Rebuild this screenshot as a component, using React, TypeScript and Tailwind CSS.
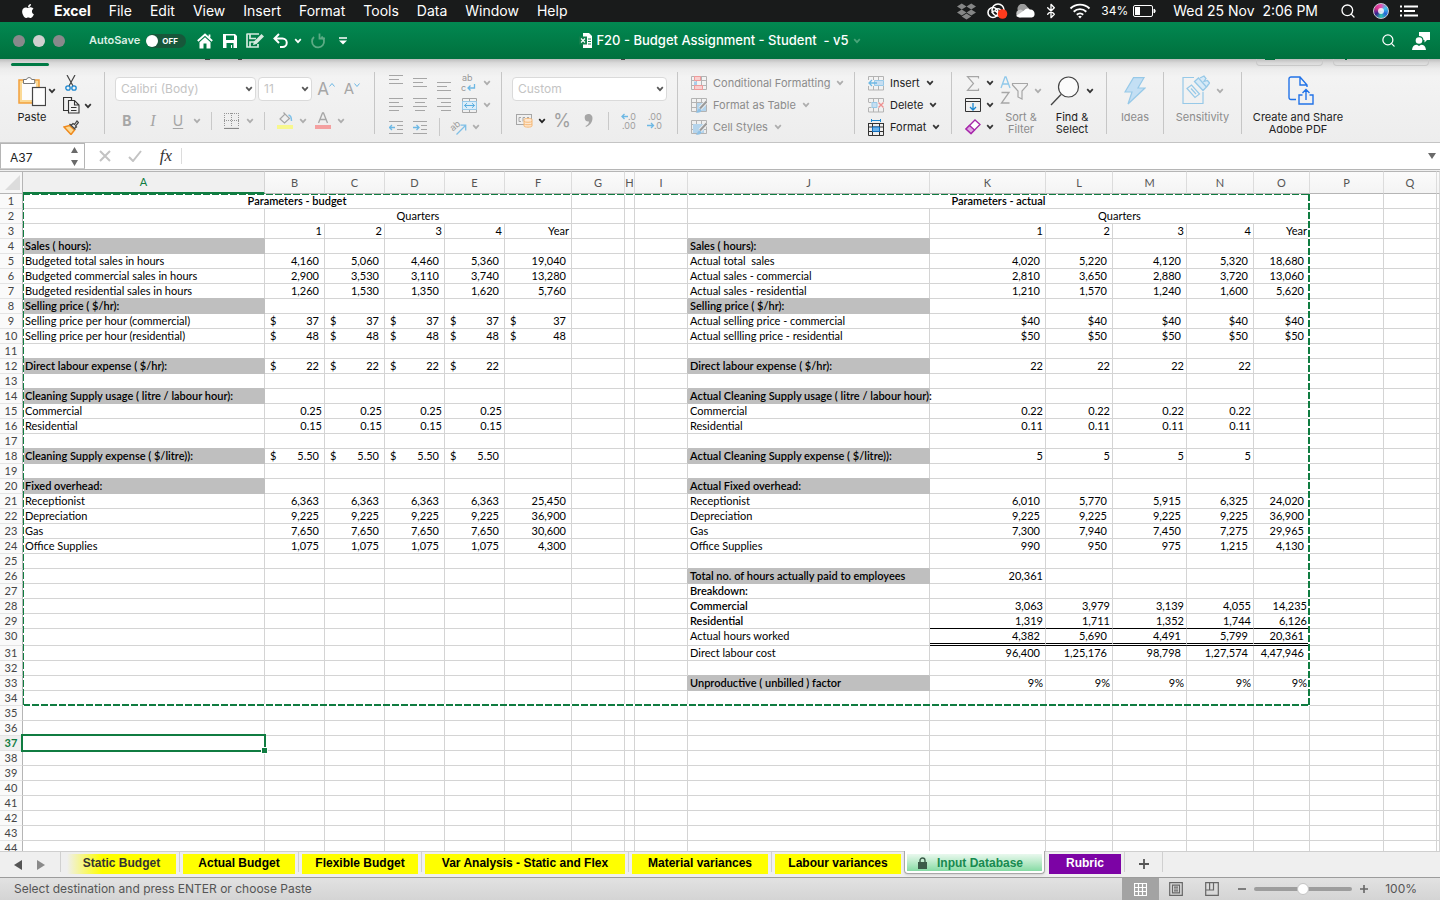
import type { ReactNode } from "react";
import { FaApple, FaDropbox } from "react-icons/fa";
import { Bluetooth, Search } from "lucide-react";

/* ---------- sheet data ---------- */

type Cell = {
  text?: string;
  kind?: "label" | "plain" | "acct" | "cur" | "center";
  bold?: boolean;
  fill?: boolean;
  span?: number;
};

const COLS = "ABCDEFGHIJKLMNOPQR".split("");
const COL_WIDTHS = [
  "w-[242px]", "w-[60px]", "w-[60px]", "w-[60px]", "w-[60px]", "w-[67px]", "w-[53px]", "w-[10px]", "w-[53px]",
  "w-[242px]", "w-[116px]", "w-[67px]", "w-[74px]", "w-[67px]", "w-[56px]", "w-[74px]", "w-[53px]", "w-auto",
];
const ROW_COUNT = 44;
const sheet: Record<string, Cell> = {};

function put(row: number, startCol: string, kind: Cell["kind"], values: string[], bold = false) {
  const start = COLS.indexOf(startCol);
  values.forEach((text, i) => {
    sheet[COLS[start + i] + row] = { text, kind, bold };
  });
}
function label(row: number, col: string, text: string, style: "" | "bold" | "fill" = "") {
  sheet[col + row] = { text, kind: "label", bold: style !== "", fill: style === "fill" };
}

sheet.A1 = { text: "Parameters - budget", kind: "center", bold: true, span: 6 };
sheet.J1 = { text: "Parameters - actual", kind: "center", bold: true, span: 6 };
sheet.B2 = { text: "Quarters", kind: "center", span: 5 };
sheet.K2 = { text: "Quarters", kind: "center", span: 5 };
put(3, "B", "plain", ["1", "2", "3", "4", "Year"]);
put(3, "K", "plain", ["1", "2", "3", "4", "Year"]);

label(4, "A", "Sales ( hours):", "fill");
label(5, "A", "Budgeted total sales in hours");
label(6, "A", "Budgeted commercial sales in hours");
label(7, "A", "Budgeted residential sales in hours");
label(8, "A", "Selling price ( $/hr):", "fill");
label(9, "A", "Selling price per hour (commercial)");
label(10, "A", "Selling price per hour (residential)");
label(12, "A", "Direct labour expense ( $/hr):", "fill");
label(14, "A", "Cleaning Supply usage ( litre / labour hour):", "fill");
label(15, "A", "Commercial");
label(16, "A", "Residential");
label(18, "A", "Cleaning Supply expense ( $/litre)):", "fill");
label(20, "A", "Fixed overhead:", "fill");
label(21, "A", "Receptionist");
label(22, "A", "Depreciation");
label(23, "A", "Gas");
label(24, "A", "Office Supplies");
put(5, "B", "acct", ["4,160", "5,060", "4,460", "5,360", "19,040"]);
put(6, "B", "acct", ["2,900", "3,530", "3,110", "3,740", "13,280"]);
put(7, "B", "acct", ["1,260", "1,530", "1,350", "1,620", "5,760"]);
put(9, "B", "cur", ["37", "37", "37", "37", "37"]);
put(10, "B", "cur", ["48", "48", "48", "48", "48"]);
put(12, "B", "cur", ["22", "22", "22", "22"]);
put(15, "B", "plain", ["0.25", "0.25", "0.25", "0.25"]);
put(16, "B", "plain", ["0.15", "0.15", "0.15", "0.15"]);
put(18, "B", "cur", ["5.50", "5.50", "5.50", "5.50"]);
put(21, "B", "acct", ["6,363", "6,363", "6,363", "6,363", "25,450"]);
put(22, "B", "acct", ["9,225", "9,225", "9,225", "9,225", "36,900"]);
put(23, "B", "acct", ["7,650", "7,650", "7,650", "7,650", "30,600"]);
put(24, "B", "acct", ["1,075", "1,075", "1,075", "1,075", "4,300"]);

label(4, "J", "Sales ( hours):", "fill");
label(5, "J", "Actual total  sales");
label(6, "J", "Actual sales - commercial");
label(7, "J", "Actual sales - residential");
label(8, "J", "Selling price ( $/hr):", "fill");
label(9, "J", "Actual selling price - commercial");
label(10, "J", "Actual sellling price - residential");
label(12, "J", "Direct labour expense ( $/hr):", "fill");
label(14, "J", "Actual Cleaning Supply usage ( litre / labour hour):", "fill");
label(15, "J", "Commercial");
label(16, "J", "Residential");
label(18, "J", "Actual Cleaning Supply expense ( $/litre)):", "fill");
label(20, "J", "Actual Fixed overhead:", "fill");
label(21, "J", "Receptionist");
label(22, "J", "Depreciation");
label(23, "J", "Gas");
label(24, "J", "Office Supplies");
label(26, "J", "Total no. of hours actually paid to employees", "fill");
label(27, "J", "Breakdown:", "bold");
label(28, "J", "Commercial", "bold");
label(29, "J", "Residential", "bold");
label(30, "J", "Actual hours worked");
label(31, "J", "Direct labour cost");
label(33, "J", "Unproductive ( unbilled ) factor", "fill");
put(5, "K", "acct", ["4,020", "5,220", "4,120", "5,320", "18,680"]);
put(6, "K", "acct", ["2,810", "3,650", "2,880", "3,720", "13,060"]);
put(7, "K", "acct", ["1,210", "1,570", "1,240", "1,600", "5,620"]);
put(9, "K", "acct", ["$40", "$40", "$40", "$40", "$40"]);
put(10, "K", "acct", ["$50", "$50", "$50", "$50", "$50"]);
put(12, "K", "plain", ["22", "22", "22", "22"]);
put(15, "K", "plain", ["0.22", "0.22", "0.22", "0.22"]);
put(16, "K", "plain", ["0.11", "0.11", "0.11", "0.11"]);
put(18, "K", "plain", ["5", "5", "5", "5"]);
put(21, "K", "acct", ["6,010", "5,770", "5,915", "6,325", "24,020"]);
put(22, "K", "acct", ["9,225", "9,225", "9,225", "9,225", "36,900"]);
put(23, "K", "acct", ["7,300", "7,940", "7,450", "7,275", "29,965"]);
put(24, "K", "acct", ["990", "950", "975", "1,215", "4,130"]);
put(26, "K", "plain", ["20,361"]);
put(28, "K", "plain", ["3,063", "3,979", "3,139", "4,055", "14,235"]);
put(29, "K", "plain", ["1,319", "1,711", "1,352", "1,744", "6,126"]);
put(30, "K", "acct", ["4,382", "5,690", "4,491", "5,799", "20,361"]);
put(31, "K", "acct", ["96,400", "1,25,176", "98,798", "1,27,574", "4,47,946"]);
put(33, "K", "plain", ["9%", "9%", "9%", "9%", "9%"]);

/* ---------- small shared pieces ---------- */

function Chevron({ className = "text-[#333]" }: { className?: string }) {
  return (
    <svg width="8" height="6" viewBox="0 0 8 6" className={`shrink-0 ${className}`} fill="none" stroke="currentColor" strokeWidth="1.7">
      <path d="M1.2 1.2 4 4.2 6.8 1.2" />
    </svg>
  );
}

function Svg({ w, h, children, className = "" }: { w: number; h: number; children: ReactNode; className?: string }) {
  return (
    <svg width={w} height={h} viewBox={`0 0 ${w} ${h}`} fill="none" className={`shrink-0 ${className}`}>
      {children}
    </svg>
  );
}

function IconButton({ name, className = "", children }: { name: string; className?: string; children: ReactNode }) {
  return (
    <button type="button" aria-label={name} className={`flex shrink-0 items-center justify-center ${className}`}>
      {children}
    </button>
  );
}

const Divider = () => <div className="mt-[5px] h-[62px] w-px shrink-0 bg-[#c6c6c6]" />;
const SmallDivider = ({ className = "" }: { className?: string }) => (
  <div className={`h-[18px] w-px shrink-0 bg-[#c9c9c9] ${className}`} />
);

/* ---------- macOS menu bar ---------- */

function MenuBar() {
  const menus = ["File", "Edit", "View", "Insert", "Format", "Tools", "Data", "Window", "Help"];
  return (
    <nav className="flex h-[22px] shrink-0 items-center bg-[#191b1b] pr-[22px] pl-5 text-sm leading-[22px] text-white">
      <FaApple className="mr-[18px] h-4 w-4 shrink-0" aria-hidden />
      <div className="flex gap-[18px] whitespace-nowrap">
        <a href="#excel" className="font-bold">Excel</a>
        {menus.map((m) => (
          <a key={m} href={`#${m.toLowerCase()}`}>{m}</a>
        ))}
      </div>
      <div className="ml-auto flex items-center whitespace-nowrap">
        <FaDropbox className="mr-2.5 h-[19px] w-[19px] text-[#858686]" />
        <Svg w={22} h={18} className="mr-1.5">
          <circle cx="7" cy="10.5" r="5" stroke="#fff" strokeWidth="1.6" />
          <circle cx="12" cy="8" r="6" stroke="#fff" strokeWidth="1.6" />
          <path d="M6 11a2.5 2.5 0 0 1 4-1.6l4 3.4M9 8.5a3.5 3.5 0 0 1 6 0" stroke="#fff" strokeWidth="1.4" />
          <circle cx="16.5" cy="12" r="4.8" fill="#ff3b1d" />
        </Svg>
        <Svg w={21} h={14} className="mr-2">
          <path d="M4 7a5 5 0 0 1 9-4.5L15.5 5 6 10z" fill="#9b9c9c" />
          <path d="M5 13.5a4 4 0 0 1 0-7.6 6 6 0 0 1 2-.3l9 5.9" fill="#c5c5c5" />
          <path d="M6 13.5 2 12l8-5.5a4.5 4.5 0 0 1 6-1 4 4 0 0 1 4.5 4.5 3 3 0 0 1-2.5 3.5z" fill="#fff" />
        </Svg>
        <Bluetooth className="mr-2.5 h-[18px] w-[16px]" strokeWidth={2} />
        <Svg w={22} h={16} className="mr-2.5">
          <path d="M1.5 5.5a13.5 13.5 0 0 1 19 0M4.7 8.7a9 9 0 0 1 12.6 0M7.8 11.7a4.6 4.6 0 0 1 6.4 0" stroke="#fff" strokeWidth="1.9" />
          <path d="m11 15.5-1.8-2a2.6 2.6 0 0 1 3.6 0z" fill="#fff" />
        </Svg>
        <span className="mr-[5px] text-xs leading-[22px]">34%</span>
        <Svg w={24} h={12} className="mr-4">
          <rect x="0.5" y="0.5" width="19" height="11" rx="1.5" stroke="#fff" />
          <rect x="2" y="2" width="5" height="8" fill="#fff" />
          <path d="M21 4c1.5.3 1.5 3.7 0 4z" fill="#fff" stroke="#fff" />
        </Svg>
        <time className="mr-[22px]">Wed 25 Nov&nbsp; 2:06 PM</time>
        <Search className="mr-[17px] h-4 w-4" strokeWidth={2} />
        <span className="mr-[11px] flex h-4 w-4 items-center justify-center rounded-full border border-[#c9c9d4] bg-[conic-gradient(#e84fb0,#3fc8f0,#2764d8,#2fc7b0,#34208c,#d7358e,#e84fb0)]">
          <span className="h-1.5 w-1.5 rounded-full bg-white/80" />
        </span>
        <Svg w={18} h={12}>
          <path d="M0 1.5h2M0 6h2M0 10.5h2M4 1.5h14M4 6h11M4 10.5h14" stroke="#fff" strokeWidth="2" />
        </Svg>
      </div>
    </nav>
  );
}

/* ---------- window title bar ---------- */

function TitleBar() {
  return (
    <header className="grid h-[37px] shrink-0 grid-cols-[1fr_auto_1fr] items-center bg-gradient-to-b from-[#028851] to-[#00703d] text-white">
      <div className="flex items-center pl-[13px]">
        <IconButton name="Close" className="mr-2 h-3 w-3 rounded-full bg-[#88898b]">{null}</IconButton>
        <IconButton name="Minimise" className="mr-2 h-3 w-3 rounded-full bg-[#d0d0d0]">{null}</IconButton>
        <IconButton name="Zoom" className="mr-6 h-3 w-3 rounded-full bg-[#88898b]">{null}</IconButton>
        <span id="autosave" className="mr-1.5 text-[11px] font-semibold text-[#dcefe4]">AutoSave</span>
        <button
          type="button"
          role="switch"
          aria-checked="false"
          aria-labelledby="autosave"
          className="mr-[11px] flex h-[14px] w-10 items-center gap-1 rounded-full bg-[#17573a]"
        >
          <span className="h-3 w-3 rounded-full bg-white" />
          <span className="text-[8px] font-bold leading-[14px]">OFF</span>
        </button>
        <IconButton name="Home" className="mr-2.5">
          <Svg w={16} h={16}>
            <path d="M.8 8 8 1.5 15.2 8M12.5 4.5V1.5" stroke="#fff" strokeWidth="1.8" />
            <path d="M2.5 9.2 8 4.3l5.5 4.9V15.5H9.5v-5h-3v5h-4z" fill="#fff" />
          </Svg>
        </IconButton>
        <IconButton name="Save" className="mr-[9px]">
          <Svg w={14} h={14}>
            <path d="M0 0h12l2 2v12H0z" fill="#fff" />
            <path d="M3 1.5h8V6H3zM3.5 9h7v5h-1.5v-3H8v3H3.5z" fill="#007d48" />
          </Svg>
        </IconButton>
        <IconButton name="Save as" className="mr-2">
          <Svg w={19} h={15}>
            <path d="M1 1h12M1 .5V14h3M4 1v4.5h6M4 14V9h5M1 14h11V11" stroke="#d5eadf" strokeWidth="1.7" />
            <path d="m7 12 1-3.5L15.5 1 18 3.5 10.5 11z" fill="#d5eadf" />
          </Svg>
        </IconButton>
        <IconButton name="Undo" className="mr-[5px]">
          <Svg w={16} h={15}>
            <path d="M6 1 1.5 5.5 6 10M1.5 5.5h8a4.2 4.2 0 0 1 0 8.5H7" stroke="#fff" strokeWidth="2" />
          </Svg>
        </IconButton>
        <IconButton name="Undo history" className="mr-2"><Chevron className="text-white" /></IconButton>
        <IconButton name="Repeat" className="mr-[13px]">
          <Svg w={16} h={16}>
            <path d="M4 4A6 6 0 1 0 11.5 3.5M9.5.5v5H15" stroke="#5cab85" strokeWidth="1.8" />
          </Svg>
        </IconButton>
        <IconButton name="Customise toolbar">
          <Svg w={8} h={8}>
            <path d="M0 1h8" stroke="#fff" strokeWidth="1.5" />
            <path d="M0 3.5h8L4 7.5z" fill="#fff" />
          </Svg>
        </IconButton>
      </div>
      <h1 className="flex items-center gap-1 text-[13px] font-medium whitespace-pre">
        <Svg w={13} h={15}>
          <path d="M4 0h6l3 3v12H4z" fill="#fff" />
          <path d="M0 3.5h8v8H0z" fill="#12804d" />
          <path d="m2 5.5 4 4M6 5.5l-4 4" stroke="#fff" strokeWidth="1.1" />
          <path d="M9 6h3M9 8.5h3M9 11h3" stroke="#12804d" />
        </Svg>
        F20 - Budget Assignment - Student  - v5
        <Chevron className="text-[#4aa57a]" />
      </h1>
      <div className="flex items-center justify-end gap-4 pr-2.5">
        <IconButton name="Search sheet"><Search className="h-[15px] w-[15px]" strokeWidth={2} /></IconButton>
        <IconButton name="Collaborators">
          <Svg w={18} h={18}>
            <circle cx="7" cy="8.5" r="3.3" fill="#fff" />
            <path d="M0 18c.3-3.5 2-5.2 5-5.2l2 1.2 2-1.2c3 0 4.7 1.7 5 5.2z" fill="#fff" />
            <path d="M7 0h11v8h-3l-2.5 2.5V8h-1A4.5 4.5 0 0 0 7 4z" fill="#fff" />
          </Svg>
        </IconButton>
      </div>
    </header>
  );
}

/* ---------- ribbon ---------- */

const GRAY = "#b3b3b3";
const BLUE = "#97c9e8";

function Lines({ widths, align = "left", top = 1 }: { widths: number[]; align?: "left" | "center" | "right"; top?: number }) {
  return (
    <Svg w={14} h={16}>
      {widths.map((w, i) => {
        const x = align === "left" ? 0 : align === "right" ? 14 - w : (14 - w) / 2;
        return <rect key={i} x={x} y={top + i * 4} width={w} height="1" fill="#a6a6a6" />;
      })}
    </Svg>
  );
}

function Indent({ out }: { out?: boolean }) {
  return (
    <Svg w={14} h={14}>
      <path d="M0 1.5h14M8 5.5h6M8 9.5h6M0 13.5h14" stroke="#a6a6a6" />
      <path d={out ? "M6 7.5H.8M3 5 .5 7.5 3 10" : "M0 7.5h5.5M3.5 5 6 7.5 3.5 10"} stroke="#6db8e4" strokeWidth="1.3" />
    </Svg>
  );
}

function StyleIcon({ kind }: { kind: "cond" | "table" | "cell" }) {
  return (
    <Svg w={16} h={15}>
      <path d="M.5.5h15v13H.5zM.5 4.5h15M.5 9.5h15M5.5.5v13M10.5.5v13" stroke={GRAY} />
      {kind === "cond" && (
        <>
          <path d="M3.5.5h6v4h-6zM3.5 9.5h8v4h-8z" fill="#f8cfcf" stroke="#f09a9a" />
          <path d="M3 5.5h3v3.5H3z" fill="#a9cdea" />
        </>
      )}
      {kind === "table" && <path d="M6 5h9v8H6z" fill="#b4d4ec" />}
      {kind === "cell" && <path d="M2 4h11v9H2z" fill="#b4d4ec" />}
      {kind !== "cond" && (
        <>
          <path d="M15.5 3.5 9 10.5" stroke="#f0f0f0" strokeWidth="4" />
          <path d="M15.5 3.5 9 10.5" stroke="#9a9a9a" strokeWidth="2" />
          <path d="M4.5 14.5c2 0 1.5-3 3.5-3.5s3 2 1.5 3-3.5.8-5 .5z" fill="#8fc0e4" />
        </>
      )}
    </Svg>
  );
}

function CellsIcon({ kind }: { kind: "insert" | "delete" | "format" }) {
  if (kind === "format")
    return (
      <Svg w={16} h={17}>
        <path d="M3.5 1.5h9M3.5 0v3M12.5 0v3" stroke="#1b87d0" />
        <path d="M0 4.5h16M.5 4v12.5h15V4M0 8h16M0 12.5h16M4.5 4v12.5M11.5 4v12.5" stroke="#333" />
        <path d="M4.5 8h7v4.5h-7z" fill="#6cb4ec" stroke="#0f6cbd" />
      </Svg>
    );
  return (
    <Svg w={16} h={15}>
      <path d="M.5 4V.5h15V4M.5 10v4h15v-4M5.5.5V4M10.5.5V4M5.5 10v4M10.5 10v4" stroke={GRAY} />
      {kind === "insert" ? (
        <>
          <path d="M6.5 4.5h9v5h-9z" fill="#c7def1" stroke={BLUE} />
          <path d="M9 7H1M4 4 1 7l3 3" stroke="#6db8e4" strokeWidth="1.3" />
        </>
      ) : (
        <>
          <path d="M.5 4.5h3M.5 9.5h3" stroke={GRAY} />
          <path d="M4 4.5h5v5H4z" fill="#c7def1" stroke={BLUE} />
          <path d="m10.5 4.5 5 5M15.5 4.5l-5 5" stroke="#ee8f8f" strokeWidth="1.3" />
        </>
      )}
    </Svg>
  );
}

function MenuRow({ icon, text, dim }: { icon: ReactNode; text: string; dim?: boolean }) {
  return (
    <button
      type="button"
      className={`flex h-[22px] items-center gap-1.5 whitespace-nowrap ${dim ? "text-[#8c8c8c]" : "text-[#222]"}`}
    >
      {icon}
      <span>{text}</span>
      <Chevron className={dim ? "text-[#adadad]" : "text-[#333]"} />
    </button>
  );
}

function RibbonSelect({ name, value, className }: { name: string; value: string; className: string }) {
  return (
    <div className={`relative ${className}`}>
      <select
        aria-label={name}
        className="block h-6 w-full appearance-none rounded-sm border border-[#dadada] bg-white pl-[5px] text-xs text-[#c4c4c4]"
      >
        <option>{value}</option>
      </select>
      <span className="pointer-events-none absolute top-[9px] right-[3px]">
        <Chevron className="text-[#555]" />
      </span>
    </div>
  );
}

function BigButton({ icon, lines, dim, chevron, className }: { icon: ReactNode; lines: string[]; dim?: boolean; chevron?: boolean; className: string }) {
  return (
    <button
      type="button"
      className={`flex shrink-0 flex-col items-center pt-[7px] leading-3 ${dim ? "text-[#8c8c8c]" : "text-[#222]"} ${className}`}
    >
      <span className="mb-1 flex h-[33px] items-center gap-1.5">
        {icon}
        {chevron && <Chevron className={dim ? "text-[#adadad]" : "text-[#333]"} />}
      </span>
      {lines.map((l) => (
        <span key={l} className="whitespace-nowrap">{l}</span>
      ))}
    </button>
  );
}

function Ribbon() {
  return (
    <section
      aria-label="Home ribbon"
      className="shrink-0 border-b border-[#c4c4c4] bg-[linear-gradient(to_bottom,#bdbdbd_0px,#dadada_4px,#ececec_10px,#f3f3f3_18px,#ededed_100%)] text-[11px] text-[#222]"
    >
      <div className="flex h-2 items-start pr-[11px] pl-[11px]">
        <span className="mt-1 h-[3px] w-[38px] rounded-full bg-[#007a45]" />
        <span className="ml-[156px] h-px w-[5px] bg-[#444]" />
        <span className="ml-7 h-px w-[4px] bg-[#444]" />
        <span className="ml-[379px] h-px w-[4px] bg-[#444]" />
        <span className="ml-auto flex h-[7px] w-[67px] rounded-b border border-t-0 border-[#c9c9c9] pl-2">
          <span className="h-px w-2.5 bg-[#00703d]" />
        </span>
        <span className="ml-2.5 flex h-[7px] w-24 rounded-b border border-t-0 border-[#c9c9c9] pl-[11px]">
          <span className="h-px w-0.5 bg-[#00703d]" />
        </span>
      </div>

      <div className="flex h-[75px]">
        {/* clipboard */}
        <div className="flex w-[104px] shrink-0 pl-4">
          <button type="button" className="flex w-8 flex-col items-center pt-2 leading-3">
            <Svg w={28} h={32} className="mb-1">
              <rect x="1" y="5" width="20" height="23" fill="#fbd995" stroke="#f2a03d" strokeWidth="1.5" />
              <rect x="4" y="8" width="14" height="17" fill="#fdfdfd" />
              <path d="M5.5 8.5v-4h3a2.7 2.7 0 0 1 5.2 0h3v4z" fill="#fff" stroke="#777" />
              <rect x="14.5" y="12.5" width="13" height="18" fill="#fdfdfd" stroke="#444" strokeWidth="1.2" />
            </Svg>
            <span>Paste</span>
          </button>
          <div className="flex h-12 w-3 items-center"><Chevron /></div>
          <div className="ml-[3px] flex flex-col pt-[5px]">
            <IconButton name="Cut" className="h-[22px] w-4">
              <Svg w={12} h={16}>
                <path d="m2 0 6 11M10 0 4 11" stroke="#444" strokeWidth="1.2" />
                <circle cx="3" cy="13" r="2.2" stroke="#1b87d0" strokeWidth="1.3" />
                <circle cx="9" cy="13" r="2.2" stroke="#1b87d0" strokeWidth="1.3" />
              </Svg>
            </IconButton>
            <IconButton name="Copy" className="h-[22px] w-4">
              <Svg w={17} h={17}>
                <path d="M5.5 13.5h-5V.5h8v3" stroke="#333" strokeWidth="1.2" />
                <path d="M5.5 3.5h6l4.5 4.5v8H5.5zM11.5 3.5v4.5H16M8 10.5h5.5M8 13.5h5.5" stroke="#333" strokeWidth="1.1" />
              </Svg>
            </IconButton>
            <IconButton name="Format painter" className="h-[22px] w-4">
              <Svg w={16} h={15}>
                <path d="m1 7 5.5-1.5 5 4.5L8 14.5z" fill="#fbd995" stroke="#ef8a1d" strokeWidth="1.5" />
                <path d="m6.5 4 6 5.5M8 5.5l2-2 1.5 1L14 1l1.5 1.5L12.5 6l1 1-2 1.5" stroke="#444" strokeWidth="1.2" />
              </Svg>
            </IconButton>
          </div>
          <div className="ml-[5px] flex h-[77px] items-center"><Chevron /></div>
        </div>
        <Divider />

        {/* font */}
        <div className="flex w-[269px] shrink-0 flex-col gap-2 pt-[10px] pl-2.5">
          <div className="flex items-center">
            <RibbonSelect name="Font" value="Calibri (Body)" className="mr-0.5 w-[141px]" />
            <RibbonSelect name="Font size" value="11" className="w-[54px]" />
            <IconButton name="Increase font size" className="ml-1.5 w-4 text-[17px] leading-5 text-[#a6a6a6]">
              <span>A</span>
              <svg width="6" height="4" className="mb-2 shrink-0" viewBox="0 0 6 4" fill="none" stroke="#6db8e4"><path d="m.5 3.5 2.5-3 2.5 3" /></svg>
            </IconButton>
            <IconButton name="Decrease font size" className="ml-2.5 w-4 text-[15px] leading-5 text-[#a6a6a6]">
              <span>A</span>
              <svg width="6" height="4" className="mb-2 shrink-0" viewBox="0 0 6 4" fill="none" stroke="#6db8e4"><path d="m.5.5 2.5 3 2.5-3" /></svg>
            </IconButton>
          </div>
          <div className="flex h-[23px] items-center text-[#a6a6a6]">
            <IconButton name="Bold" className="ml-[5px] w-[14px] text-sm font-bold">B</IconButton>
            <IconButton name="Italic" className="ml-3 w-[14px] font-['Liberation_Serif',serif] text-base italic">I</IconButton>
            <IconButton name="Underline" className="ml-[11px] w-[14px] text-sm underline underline-offset-2">U</IconButton>
            <Chevron className="ml-2 text-[#adadad]" />
            <SmallDivider className="ml-2.5" />
            <IconButton name="Borders" className="ml-3">
              <Svg w={16} h={16}>
                <path d="M0 .5h15M0 7.5h15M.5 0v14M7.5 0v14M14.5 0v14" stroke="#969696" strokeDasharray="1 1" />
                <path d="M0 15.5h15" stroke="#888" strokeWidth="1.2" />
              </Svg>
            </IconButton>
            <Chevron className="ml-1.5 text-[#adadad]" />
            <SmallDivider className="ml-2.5" />
            <IconButton name="Fill colour" className="ml-3">
              <Svg w={17} h={17}>
                <path d="m3 7 5-5 4.5 4.5-5 4.5zM8 2 6.5.5" stroke="#a6a6a6" strokeWidth="1.2" />
                <path d="M11.5 3c2.5.5 3 3 3 6" stroke="#7fc0e8" strokeWidth="1.5" />
                <path d="M0 13h16v4H0z" fill="#f7f78e" />
              </Svg>
            </IconButton>
            <Chevron className="ml-[5px] text-[#adadad]" />
            <IconButton name="Font colour" className="ml-2">
              <Svg w={16} h={17}>
                <path d="m3.5 11 4-10h1l4 10M5 7.5h6" stroke="#a6a6a6" strokeWidth="1.3" />
                <path d="M0 13h16v4H0z" fill="#f4a0a0" />
              </Svg>
            </IconButton>
            <Chevron className="ml-1.5 text-[#adadad]" />
          </div>
        </div>
        <Divider />

        {/* alignment */}
        <div className="w-[126px] shrink-0 pt-[5px] pl-[14px]">
          <div className="flex h-[22px] items-center gap-2.5">
            <IconButton name="Top align"><Lines widths={[14, 10, 14]} top={0} /></IconButton>
            <IconButton name="Middle align"><Lines widths={[14, 10, 14]} top={3} /></IconButton>
            <IconButton name="Bottom align"><Lines widths={[14, 10, 14]} top={7} /></IconButton>
            <IconButton name="Wrap text" className="w-4">
              <span className="grid w-4 grid-cols-[6px_10px] items-center text-left text-[9px] leading-[10px] text-[#999]">
                <span className="col-span-2 pl-px">ab</span>
                <span>c</span>
                <Svg w={9} h={8}><path d="M7.5 0v4H1M3.5 1.5 1 4l2.5 2.5" stroke="#6db8e4" strokeWidth="1.3" /></Svg>
              </span>
            </IconButton>
            <Chevron className="-ml-1 text-[#adadad]" />
          </div>
          <div className="flex h-[22px] items-center gap-2.5">
            <IconButton name="Align left"><Lines widths={[14, 10, 14, 10]} /></IconButton>
            <IconButton name="Centre"><Lines widths={[14, 10, 14, 10]} align="center" /></IconButton>
            <IconButton name="Align right"><Lines widths={[14, 10, 14, 10]} align="right" /></IconButton>
            <IconButton name="Merge" className="w-4">
              <Svg w={15} h={15}>
                <path d="M.5.5h14v14H.5zM.5 3.5h14M.5 11.5h14M7.5.5v3M7.5 11.5v3" stroke="#a6a6a6" />
                <path d="M.5 3.5h14v8H.5z" fill="#dcedf8" stroke={BLUE} />
                <path d="M2.5 7.5h10M5 5.2 2.5 7.5 5 9.8M10 5.2l2.5 2.3L10 9.8" stroke="#5aaee0" />
              </Svg>
            </IconButton>
            <Chevron className="-ml-1 text-[#adadad]" />
          </div>
          <div className="flex h-[22px] items-center gap-2.5">
            <IconButton name="Decrease indent"><Indent out /></IconButton>
            <IconButton name="Increase indent"><Indent /></IconButton>
            <SmallDivider className="ml-0.5" />
            <IconButton name="Orientation">
              <svg width="18" height="17" viewBox="0 0 18 17" fill="none" className="shrink-0 overflow-visible">
                <text x="1" y="11" fontSize="9" fill="#999" transform="rotate(-40 4 9)">ab</text>
                <path d="m6.5 15.5 9-9M10.5 6.2h5.2v5.2" stroke="#7fbfe6" strokeWidth="1.3" />
              </svg>
            </IconButton>
            <Chevron className="-ml-1.5 text-[#adadad]" />
          </div>
        </div>
        <Divider />

        {/* number */}
        <div className="flex w-[175px] shrink-0 flex-col gap-2 pt-[10px] pl-2.5">
          <RibbonSelect name="Number format" value="Custom" className="w-[155px]" />
          <div className="flex h-[23px] items-center">
            <IconButton name="Accounting format" className="ml-1">
              <Svg w={17} h={15}>
                <rect x=".5" y="1.5" width="15" height="10" stroke="#a6a6a6" />
                <path d="M5 4.5H3v4h2M9 4.5H7v4M13 4.5h-2" stroke="#a6a6a6" />
                <path d="M8 6.5c0-1.5 8-1.5 8 0v6.5c0 1.5-8 1.5-8 0z" fill="#fde7cf" stroke="#f5b877" />
                <path d="M8 8.5c1 1 7 1 8 0M8 11c1 1 7 1 8 0" stroke="#f5b877" />
              </Svg>
            </IconButton>
            <Chevron className="ml-[5px] text-[#222]" />
            <IconButton name="Percent" className="ml-2 w-4 text-lg leading-5 text-[#a0a0a0]">%</IconButton>
            <IconButton name="Comma style" className="ml-[14px]">
              <Svg w={9} h={13}>
                <path d="M4 0a4 4 0 0 1 4.5 4c0 4-2.5 7.5-6.5 9l-.5-1c2-1 3.5-2.5 3.5-4.5A3.7 3.7 0 1 1 4 0z" fill="#a6a6a6" />
              </Svg>
            </IconButton>
            <SmallDivider className="ml-[15px]" />
            <IconButton name="Increase decimal" className="ml-3">
              <span className="grid w-4 grid-cols-[7px_9px] text-left text-[9px] leading-[9px] text-[#a0a0a0]">
                <Svg w={8} h={8}><path d="M7 4.5H1M3.5 2 1 4.5 3.5 7" stroke="#6db8e4" strokeWidth="1.3" /></Svg>
                <span>.0</span>
                <span className="col-span-2 pl-px">.00</span>
              </span>
            </IconButton>
            <IconButton name="Decrease decimal" className="ml-2.5">
              <span className="grid w-4 grid-cols-[7px_9px] text-left text-[9px] leading-[9px] text-[#a0a0a0]">
                <span className="col-span-2 pl-px">.00</span>
                <Svg w={8} h={8}><path d="M0 4.5h6.5M4 2l2.5 2.5L4 7" stroke="#6db8e4" strokeWidth="1.3" /></Svg>
                <span>.0</span>
              </span>
            </IconButton>
          </div>
        </div>
        <Divider />

        {/* styles */}
        <div className="w-[176px] shrink-0 pt-[5px] pl-[13px]">
          <MenuRow dim icon={<StyleIcon kind="cond" />} text="Conditional Formatting" />
          <MenuRow dim icon={<StyleIcon kind="table" />} text="Format as Table" />
          <MenuRow dim icon={<StyleIcon kind="cell" />} text="Cell Styles" />
        </div>
        <Divider />

        {/* cells */}
        <div className="w-24 shrink-0 pt-[5px] pl-[13px]">
          <MenuRow icon={<CellsIcon kind="insert" />} text="Insert" />
          <MenuRow icon={<CellsIcon kind="delete" />} text="Delete" />
          <MenuRow icon={<CellsIcon kind="format" />} text="Format" />
        </div>
        <Divider />

        {/* editing */}
        <div className="flex w-[154px] shrink-0 pl-[13px]">
          <div className="flex flex-col pt-[5px]">
            <button type="button" aria-label="AutoSum" className="flex h-[22px] items-center gap-[5px]">
              <Svg w={16} h={15}><path d="M13.5 2.5V.7H2.5L8.5 7.5l-6 6.8h11V12.5" stroke="#a6a6a6" strokeWidth="1.2" /></Svg>
              <Chevron />
            </button>
            <button type="button" aria-label="Fill" className="flex h-[22px] items-center gap-[5px]">
              <Svg w={16} h={15}>
                <path d="M.5.5h15v13H.5zM.5 3.5h15" stroke="#333" />
                <path d="M8 5v7M5 9l3 3 3-3" stroke="#1b87d0" strokeWidth="1.3" />
              </Svg>
              <Chevron />
            </button>
            <button type="button" aria-label="Clear" className="flex h-[22px] items-center gap-[5px]">
              <Svg w={16} h={16}>
                <path d="m1 10 9-9 5 4.5-9 9z" fill="#fff" stroke="#a626aa" strokeWidth="1.3" />
                <path d="m1 10 3.5-3.5L9.5 11 6 14.5z" fill="#e0a6e2" stroke="#a626aa" strokeWidth="1.3" />
              </Svg>
              <Chevron />
            </button>
          </div>
          <BigButton
            dim
            chevron
            className="w-[54px]"
            lines={["Sort &", "Filter"]}
            icon={
              <Svg w={28} h={29}>
                <path d="m1 12 4-11h1l4 11M2.5 8h6" stroke="#8fc8ea" strokeWidth="1.3" />
                <path d="M1.5 16.5h7.5L1.5 27H9.5" stroke="#a6a6a6" strokeWidth="1.3" />
                <path d="M12.5 7.5h15V9l-5.5 6v8l-4-2v-6l-5.5-6z" stroke="#a6a6a6" strokeWidth="1.2" />
              </Svg>
            }
          />
          <BigButton
            chevron
            className="w-[48px]"
            lines={["Find &", "Select"]}
            icon={
              <Svg w={30} h={30}>
                <circle cx="18.5" cy="11" r="10" fill="#fbfbfb" stroke="#444" strokeWidth="1.2" />
                <path d="M11 18.5 1 29" stroke="#444" strokeWidth="1.3" />
              </Svg>
            }
          />
        </div>
        <Divider />

        <BigButton
          dim
          className="w-14"
          lines={["Ideas"]}
          icon={
            <Svg w={22} h={28}>
              <path d="M9.5.7H20L14 11h7L4 27l4-12H1z" fill="#c3dff4" stroke={BLUE} strokeWidth="1.2" />
            </Svg>
          }
        />
        <Divider />

        <BigButton
          dim
          chevron
          className="w-[77px]"
          lines={["Sensitivity"]}
          icon={
            <Svg w={28} h={31}>
              <path d="M12 2.5H1v26h20V17" stroke={BLUE} strokeWidth="1.2" />
              <path d="m5 13.5 4.5-3.5 8 9-4.5 3.5zM9 13.5l5 5.5" stroke={BLUE} strokeWidth="1.2" />
              <path d="m12.5 6.5 4-3.5 8 9-3.5 3.5zM18 3l4-2 2 2.5-2 3 3.5-1 2 2.5-3 4" fill="#d7eaf7" stroke={BLUE} strokeWidth="1.3" />
            </Svg>
          }
        />
        <Divider />

        <BigButton
          className="ml-1 w-[104px]"
          lines={["Create and Share", "Adobe PDF"]}
          icon={
            <Svg w={26} h={29} className="ml-1.5">
              <path d="M8 23.5H3a2 2 0 0 1-2-2V3a2 2 0 0 1 2-2h9l7 8v2M12 1v8h7" stroke="#2273e8" strokeWidth="1.4" />
              <path d="M14.5 19H11v9h14v-9h-3.5M18 24V14M14.5 17l3.5-3.5 3.5 3.5" stroke="#2273e8" strokeWidth="1.4" />
            </Svg>
          }
        />
      </div>
    </section>
  );
}

/* ---------- formula bar ---------- */

function FormulaBar() {
  return (
    <div className="flex h-[27px] shrink-0 items-center border-b border-[#b5b5b5] bg-white">
      <div className="flex h-full w-[85px] shrink-0 items-center border border-[#b5b5b5] border-b-[#d0d0d0]">
        <input aria-label="Name box" defaultValue="A37" className="h-full w-[70px] bg-transparent pt-0.5 pl-[9px] text-xs text-[#222] outline-none" />
        <Svg w={7} h={19}>
          <path d="M3.5 0 7 6H0zM3.5 19 0 13h7z" fill="#6a6a6a" />
        </Svg>
      </div>
      <IconButton name="Cancel" className="ml-[14px]">
        <Svg w={12} h={12}><path d="m1 1 10 10M11 1 1 11" stroke="#c3c3c3" strokeWidth="2" /></Svg>
      </IconButton>
      <IconButton name="Enter" className="ml-[17px]">
        <Svg w={14} h={12}><path d="m1 7 4 4 8-10" stroke="#c3c3c3" strokeWidth="2" /></Svg>
      </IconButton>
      <IconButton name="Insert function" className="ml-4 w-4 font-['Liberation_Serif',serif] text-[17px] leading-5 text-[#333] italic">fx</IconButton>
      <div className="ml-[7px] h-4 w-px bg-[#dcdcdc]" />
      <input aria-label="Formula" className="h-full min-w-0 flex-1 bg-transparent px-2 text-xs outline-none" />
      <IconButton name="Expand formula bar" className="mr-1">
        <Svg w={8} h={6}><path d="M0 0h8L4 6z" fill="#6a6a6a" /></Svg>
      </IconButton>
    </div>
  );
}

/* ---------- grid ---------- */

function bodyCells(row: number) {
  const out: ReactNode[] = [];
  for (let c = 0; c < COLS.length; ) {
    const key = COLS[c] + row;
    const cell = sheet[key] ?? {};
    const span = cell.span ?? 1;
    const below = sheet[COLS[c] + (row + 1)];
    const next = sheet[COLS[c + span] + row];
    const inTotals = c >= 10 && c <= 14;
    const bottom =
      inTotals && row === 29 ? "border-b border-b-black"
      : inTotals && row === 30 ? "border-b-3 border-double border-b-black"
      : cell.fill || below?.fill ? "border-b border-b-[#bfbfbf]"
      : "border-b border-b-[#d4d4d4]";
    const right = cell.fill || next?.fill ? "border-r-[#bfbfbf]" : "border-r-[#d4d4d4]";
    const align =
      cell.kind === "label" ? "pl-0.5 text-left"
      : cell.kind === "center" ? "text-center"
      : cell.kind === "plain" ? "pr-0.5 text-right"
      : "pr-[5px] text-right";
    out.push(
      <td
        key={key}
        colSpan={span}
        className={`border-r p-0 align-top whitespace-pre ${bottom} ${right} ${align} ${cell.bold ? "font-semibold" : ""} ${cell.fill ? "bg-[#bfbfbf]" : ""} ${key === "A37" ? "relative" : ""}`}
      >
        {cell.kind === "cur" ? (
          <span className="flex justify-between pl-[5px]"><span>$</span><span>{cell.text}</span></span>
        ) : (
          cell.text
        )}
        {key === "A37" && (
          <span className="absolute -inset-[2px] border-2 border-[#107c41]">
            <span className="absolute -right-[3px] -bottom-[3px] h-[5px] w-[5px] bg-[#107c41] outline outline-white" />
          </span>
        )}
      </td>,
    );
    c += span;
  }
  return out;
}

function Grid() {
  return (
    <main className="relative min-h-0 flex-1 overflow-hidden border-t border-[#f0f0f0] bg-white font-[Lato,sans-serif] text-[11px] leading-[14px] text-black">
      <table className="w-full table-fixed border-separate border-spacing-0">
        <colgroup>
          <col className="w-[23px]" />
          {COLS.map((c, i) => <col key={c} className={COL_WIDTHS[i]} />)}
        </colgroup>
        <thead>
          <tr className="h-[23px]">
            <th className="border-t border-r border-b border-[#b5b5b5] bg-[#f6f6f6] p-0">
              <Svg w={15} h={15} className="ml-[5px]"><path d="M15 0v15H0z" fill="#dcdcdc" /></Svg>
            </th>
            {COLS.map((c) => (
              <th
                key={c}
                scope="col"
                className={
                  c === "A"
                    ? "border-t border-r border-b-2 border-t-[#b5b5b5] border-r-[#d4d4d4] border-b-[#107c41] bg-[#f0f0f0] p-0 font-normal text-[#107c41]"
                    : "border-t border-r border-b border-t-[#b5b5b5] border-r-[#dcdcdc] border-b-[#b5b5b5] bg-gradient-to-b from-[#fbfbfb] to-[#f4f4f4] p-0 font-normal text-[#555]"
                }
              >
                {c === "R" ? "" : c}
              </th>
            ))}
          </tr>
        </thead>
        <tbody>
          {Array.from({ length: ROW_COUNT }, (_, i) => i + 1).map((row) => (
            <tr key={row} className={row === 30 ? "h-[17px]" : "h-[15px]"}>
              <th
                scope="row"
                className={`border-r border-b border-r-[#b5b5b5] border-b-[#e4e4e4] p-0 text-center align-top ${row === 37 ? "bg-[#efefef] font-bold text-[#107c41]" : "bg-[#fafafa] font-normal text-[#444]"}`}
              >
                {row}
              </th>
              {bodyCells(row)}
            </tr>
          ))}
        </tbody>
      </table>

      {/* copied-range outline, A1:O34 */}
      <div className="pointer-events-none absolute top-[23px] left-[23px] h-[512px] w-[1287px]">
        <span className="absolute inset-x-0 top-0 h-px bg-[repeating-linear-gradient(to_right,#107c41_0px,#107c41_7px,#fff_7px,#fff_9px)]" />
        <span className="absolute inset-x-0 bottom-0 h-0.5 bg-[repeating-linear-gradient(to_right,#107c41_0px,#107c41_7px,#fff_7px,#fff_9px)]" />
        <span className="absolute inset-y-0 left-0 w-px bg-[repeating-linear-gradient(to_bottom,#107c41_0px,#107c41_7px,#fff_7px,#fff_9px)]" />
        <span className="absolute inset-y-0 right-0 w-0.5 bg-[repeating-linear-gradient(to_bottom,#107c41_0px,#107c41_7px,#fff_7px,#fff_9px)]" />
      </div>
    </main>
  );
}

/* ---------- sheet tabs and status bar ---------- */

function SheetTabs() {
  const tabs = [
    { name: "Actual Budget", width: "w-28" },
    { name: "Flexible Budget", width: "w-[116px]" },
    { name: "Var Analysis - Static and Flex", width: "w-[200px]" },
    { name: "Material variances", width: "w-[136px]" },
    { name: "Labour variances", width: "w-[126px]" },
  ];
  const line = <span className="mx-[3px] h-5 w-px shrink-0 bg-[#d0d0d0]" />;
  return (
    <nav
      aria-label="Sheets"
      className="flex h-[26px] shrink-0 items-start border-t border-[#cfcfcf] bg-[#efefef] font-['Liberation_Sans',sans-serif] text-xs leading-4 font-bold text-black"
    >
      <IconButton name="Previous sheet" className="mt-2 ml-[14px]">
        <Svg w={8} h={10}><path d="M8 0v10L0 5z" fill="#555" /></Svg>
      </IconButton>
      <IconButton name="Next sheet" className="mt-2 ml-[15px]">
        <Svg w={8} h={10}><path d="M0 0v10l8-5z" fill="#8a8a8a" /></Svg>
      </IconButton>
      <span className="ml-[15px] h-5 w-px bg-[#d0d0d0]" />
      <button type="button" className="mt-0.5 ml-[6px] h-5 w-[109px] bg-[linear-gradient(to_right,#efefef_0px,#ffff00_35px)] pb-0.5 text-center text-[#333]">
        Static Budget
      </button>
      {tabs.map((t) => (
        <div key={t.name} className="flex items-start">
          {line}
          <button type="button" className={`mt-0.5 h-5 bg-[#ffff00] pb-0.5 text-center whitespace-nowrap ${t.width}`}>{t.name}</button>
        </div>
      ))}
      <div className="-mt-px ml-[3px] h-[23px] w-[141px] rounded-b-sm border border-t-0 border-[#a9a9a9] bg-white px-0.5 pt-[3px] shadow-sm">
        <button
          type="button"
          aria-current="page"
          className="flex h-[17px] w-full items-center gap-2.5 bg-gradient-to-b from-[#e9f8ee] to-[#85dba4] pl-[11px] whitespace-nowrap text-[#178a50]"
        >
          <Svg w={9} h={12}>
            <rect y="5" width="9" height="7" fill="#3c5c49" />
            <path d="M2 5.5V3.5a2.5 2.5 0 0 1 5 0v2" stroke="#3c5c49" strokeWidth="1.4" />
          </Svg>
          Input Database
        </button>
      </div>
      <button type="button" className="mt-0.5 ml-1 h-5 w-[72px] bg-[#7c03a5] pb-0.5 text-center text-white">Rubric</button>
      {line}
      <IconButton name="Add sheet" className="mt-[7px] ml-[11px]">
        <Svg w={10} h={10}><path d="M5 0v10M0 5h10" stroke="#555" strokeWidth="1.8" /></Svg>
      </IconButton>
      <span className="ml-[13px] h-5 w-px bg-[#d0d0d0]" />
    </nav>
  );
}

function StatusBar() {
  return (
    <footer className="flex h-[23px] shrink-0 items-center border-t border-[#9c9c9c] bg-gradient-to-b from-[#e2e2e2] to-[#d4d4d4] pr-[23px] pl-[14px] text-xs text-[#555]">
      <span className="whitespace-nowrap">Select destination and press ENTER or choose Paste</span>
      <div className="ml-auto flex h-full items-center">
        <IconButton name="Normal view" className="h-full w-[37px] bg-[#a3a3a3]">
          <Svg w={13} h={13}><path d="M.5.5h12v12H.5zM4.5.5v12M8.5.5v12M.5 4.5h12M.5 8.5h12" stroke="#fff" strokeWidth="1.2" /></Svg>
        </IconButton>
        <IconButton name="Page layout view" className="ml-2.5">
          <Svg w={14} h={14}>
            <path d="M.7.7h12.6v12.6H.7zM3.5 3.2h7v7.6h-7zM5 5.2h4M5 7h4M5 8.8h4" stroke="#666" strokeWidth="1.2" />
          </Svg>
        </IconButton>
        <IconButton name="Page break view" className="ml-[22px]">
          <Svg w={14} h={14}><path d="M.7.7h12.6v12.6H.7zM.7 8h7.8V.7M4.6.7V8" stroke="#666" strokeWidth="1.2" /></Svg>
        </IconButton>
        <IconButton name="Zoom out" className="ml-[19px]">
          <Svg w={8} h={8}><path d="M0 4h8" stroke="#666" strokeWidth="1.6" /></Svg>
        </IconButton>
        <input
          type="range"
          aria-label="Zoom"
          min={0}
          max={200}
          defaultValue={100}
          className="mx-2 h-1 w-[98px] appearance-none rounded-full bg-[#9d9d9d] [&::-webkit-slider-thumb]:h-3 [&::-webkit-slider-thumb]:w-3 [&::-webkit-slider-thumb]:appearance-none [&::-webkit-slider-thumb]:rounded-full [&::-webkit-slider-thumb]:border [&::-webkit-slider-thumb]:border-[#c4c4c4] [&::-webkit-slider-thumb]:bg-white"
        />
        <IconButton name="Zoom in">
          <Svg w={8} h={8}><path d="M0 4h8M4 0v8" stroke="#666" strokeWidth="1.6" /></Svg>
        </IconButton>
        <output className="ml-[17px]">100%</output>
      </div>
    </footer>
  );
}

export default function App() {
  return (
    <div className="flex h-screen flex-col overflow-hidden bg-white font-[Inter,sans-serif]">
      <MenuBar />
      <TitleBar />
      <Ribbon />
      <FormulaBar />
      <Grid />
      <SheetTabs />
      <StatusBar />
    </div>
  );
}
